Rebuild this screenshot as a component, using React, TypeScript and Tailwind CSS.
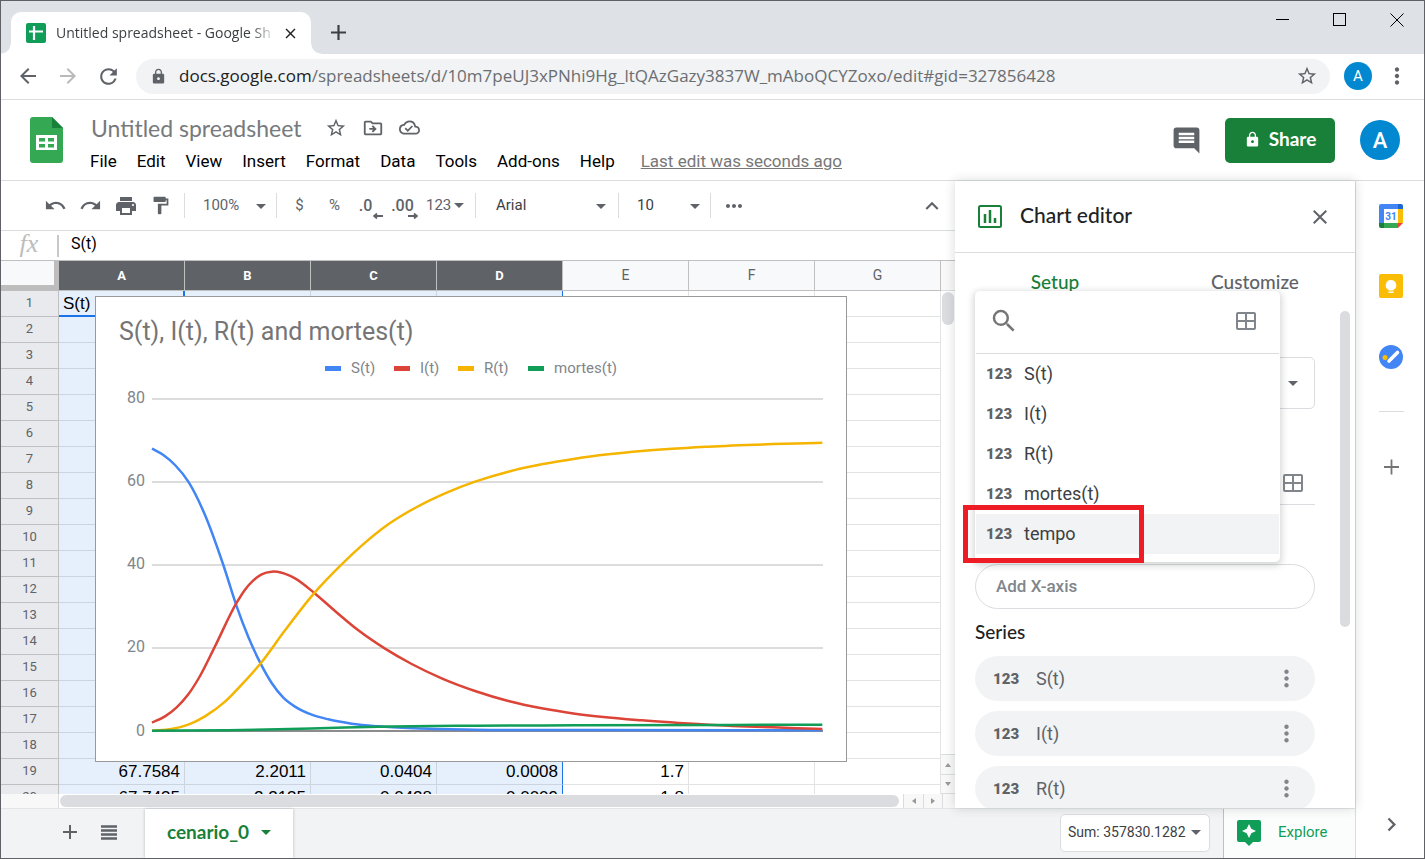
import React from "react";
import {
  MdAdd,
  MdArrowBack,
  MdArrowForward,
  MdChevronRight,
  MdClose,
  MdComment,
  MdFormatPaint,
  MdKeyboardArrowUp,
  MdLock,
  MdMoreHoriz,
  MdMoreVert,
  MdOutlineCloudDone,
  MdOutlineDriveFileMove,
  MdPrint,
  MdRedo,
  MdRefresh,
  MdSearch,
  MdStarBorder,
  MdUndo,
} from "react-icons/md";

type Point = [number, number];

const menus = ["File", "Edit", "View", "Insert", "Format", "Data", "Tools", "Add-ons", "Help"];
const columns = ["A", "B", "C", "D", "E", "F", "G"];
const fields = ["S(t)", "I(t)", "R(t)", "mortes(t)", "tempo"];
const series = ["S(t)", "I(t)", "R(t)"];

const cells: Record<number, string[]> = {
  1: ["S(t)"],
  19: ["67.7584", "2.2011", "0.0404", "0.0008", "1.7"],
  20: ["67.7435", "2.2135", "0.0428", "0.0009", "1.8"],
};

const curves: { name: string; color: string; points: Point[] }[] = [
  {
    name: "S(t)",
    color: "#4285f4",
    points: [
      [171, 206], [205, 225], [240, 255], [280, 305], [330, 405], [385, 555], [425, 679],
      [460, 771], [497, 851], [530, 909], [565, 953], [600, 980], [650, 1004], [700, 1018], [770, 1031],
      [850, 1039], [960, 1045], [1140, 1049], [1500, 1050], [2182, 1051],
    ],
  },
  {
    name: "I(t)",
    color: "#db4437",
    points: [
      [171, 1028], [210, 1009], [245, 982], [280, 943], [315, 888], [360, 799], [425, 668],
      [450, 629], [475, 601], [500, 583], [530, 575], [560, 578], [600, 595], [657, 638], [720, 693],
      [790, 751], [870, 806], [950, 852], [1040, 895], [1140, 933], [1240, 963], [1340, 985], [1440, 1001],
      [1640, 1021], [1840, 1034], [2182, 1047],
    ],
  },
  {
    name: "R(t)",
    color: "#f4b400",
    points: [
      [171, 1052], [230, 1047], [280, 1034], [330, 1009], [390, 965], [440, 914], [497, 850],
      [570, 751], [657, 640], [740, 553], [800, 497], [880, 433], [960, 384], [1050, 340], [1140, 305],
      [1240, 275], [1340, 253], [1440, 236], [1540, 223], [1640, 213], [1840, 200], [2182, 188],
    ],
  },
  {
    name: "mortes(t)",
    color: "#0f9d58",
    points: [
      [171, 1052], [400, 1051], [550, 1048], [700, 1044], [850, 1040], [1140, 1037], [1440, 1036], [2182, 1034],
    ],
  },
];

function slopeAt(points: Point[], i: number) {
  const secant = (a: number, b: number) => (points[b][1] - points[a][1]) / (points[b][0] - points[a][0]);
  if (i === 0) return secant(0, 1);
  if (i === points.length - 1) return secant(i - 1, i);
  const before = points[i][0] - points[i - 1][0];
  const after = points[i + 1][0] - points[i][0];
  return (secant(i - 1, i) * after + secant(i, i + 1) * before) / (before + after);
}

function smoothPath(points: Point[]) {
  let d = `M${points[0][0]} ${points[0][1]}`;
  for (let i = 0; i < points.length - 1; i++) {
    const [x1, y1] = points[i];
    const [x2, y2] = points[i + 1];
    const third = (x2 - x1) / 3;
    d += ` C${x1 + third} ${y1 + slopeAt(points, i) * third} ${x2 - third} ${y2 - slopeAt(points, i + 1) * third} ${x2} ${y2}`;
  }
  return d;
}

function Caret({ className = "" }: { className?: string }) {
  return (
    <svg viewBox="0 0 10 5" className={`h-[5px] w-[10px] shrink-0 ${className}`} aria-hidden="true">
      <path d="M0 0h10L5 5z" fill="currentColor" />
    </svg>
  );
}

function GridIcon() {
  return (
    <svg viewBox="0 0 20 18" className="h-[18px] w-5 text-[#80868b]" fill="none" stroke="currentColor" strokeWidth="2" aria-hidden="true">
      <rect x="1" y="1" width="18" height="16" rx="1" />
      <path d="M10 1v16M1 9h18" />
    </svg>
  );
}

function NumberMark() {
  return (
    <span className="w-[26px] shrink-0 font-['Roboto',sans-serif] text-[15px] leading-5 font-black text-[#5f6368]">
      123
    </span>
  );
}

function Divider({ className = "" }: { className?: string }) {
  return <span className={`h-[25px] w-px shrink-0 bg-[#dadce0] ${className}`} />;
}

function BrowserChrome() {
  return (
    <header>
      <div className="flex h-[53px] items-end bg-[#dee1e6]">
        <span className="h-[10px] w-[10px] bg-[radial-gradient(circle_at_0_0,#dee1e6_9px,#fff_10px)]" />
        <div className="flex h-[42px] w-[300px] items-center rounded-t-[10px] bg-white pr-3 pl-[15px]">
          <svg viewBox="0 0 20 20" className="h-5 w-5 shrink-0" aria-hidden="true">
            <rect width="20" height="20" rx="2" fill="#0f9d58" />
            <path d="M8 3v14M3 8.500h14" stroke="#fff" strokeWidth="2.200" />
          </svg>
          <span className="ml-[10px] w-[220px] font-['Open_Sans',sans-serif] text-[14px] leading-5 whitespace-nowrap text-[#3c4043] [mask-image:linear-gradient(to_right,#000_195px,transparent_220px)]">
            Untitled spreadsheet - Google Sh
          </span>
          <button aria-label="Close tab" className="ml-auto text-[#202124]">
            <MdClose size={17} />
          </button>
        </div>
        <span className="h-[10px] w-[10px] bg-[radial-gradient(circle_at_100%_0,#dee1e6_9px,#fff_10px)]" />
        <button aria-label="New tab" className="mb-[10px] ml-[3px] flex h-6 w-7 items-center justify-center text-[#3c4043]">
          <svg viewBox="0 0 15 15" className="h-[15px] w-[15px]" stroke="currentColor" strokeWidth="2.200"><path d="M7.500 0v15M0 7.500h15" /></svg>
        </button>
        <div className="mb-[27px] ml-auto flex gap-[43px] pr-5 text-black">
          <button aria-label="Minimize">
            <svg viewBox="0 0 14 14" className="h-[14px] w-[14px]" stroke="currentColor"><path d="M0 6.500h13" /></svg>
          </button>
          <button aria-label="Maximize">
            <svg viewBox="0 0 14 14" className="h-[14px] w-[14px]" stroke="currentColor" fill="none"><rect x=".5" y=".5" width="12" height="12" /></svg>
          </button>
          <button aria-label="Close window">
            <svg viewBox="0 0 14 14" className="h-[14px] w-[14px]" stroke="currentColor"><path d="M.5.5l13 13M13.500.5l-13 13" /></svg>
          </button>
        </div>
      </div>
      <div className="flex h-[46px] items-center border-b border-[#dadce0] bg-white pb-px pl-[15px] text-[#5f6368]">
        <button aria-label="Back" className="w-10"><MdArrowBack size={24} /></button>
        <button aria-label="Forward" className="w-10 text-[#bababc]"><MdArrowForward size={24} /></button>
        <button aria-label="Reload" className="w-10"><MdRefresh size={25} /></button>
        <div className="flex h-[35px] flex-1 items-center rounded-full bg-[#f1f3f4] pr-3 pl-[14px]">
          <MdLock size={17} />
          <p className="ml-3 flex-1 font-['Open_Sans',sans-serif] text-[17px] leading-6 text-[#6b6e72]">
            <span className="text-[#202124]">docs.google.com</span>
            /spreadsheets/d/10m7peUJ3xPNhi9Hg_ltQAzGazy3837W_mAboQCYZoxo/edit#gid=327856428
          </p>
          <button aria-label="Bookmark"><MdStarBorder size={22} /></button>
        </div>
        <span className="ml-[14px] flex h-7 w-7 items-center justify-center rounded-full bg-[#0288d1] font-['Roboto',sans-serif] text-[15px] text-white">A</span>
        <button aria-label="Browser menu" className="mr-[14px] ml-3"><MdMoreVert size={26} /></button>
      </div>
    </header>
  );
}

function DocumentHeader() {
  return (
    <div className="flex h-[81px] shrink-0 items-center border-b border-[#dadce0] bg-white pr-6 pl-[29px]">
      <svg viewBox="0 0 33 46" className="h-[46px] w-[33px] shrink-0" aria-hidden="true">
        <path d="M3 0h19l11 11v32a3 3 0 0 1-3 3H3a3 3 0 0 1-3-3V3a3 3 0 0 1 3-3z" fill="#34a853" />
        <path d="M22 0l11 11H22z" fill="#188038" />
        <path d="M6 18h21v15H6z" fill="#fff" />
        <path d="M9 21h6v3.500H9zM18 21h6v3.500h-6zM9 27h6v3.500H9zM18 27h6v3.500h-6z" fill="#34a853" />
      </svg>
      <div className="ml-[17px] pt-[5px]">
        <div className="flex h-9 items-center pl-[11px] text-[#5f6368]">
          <h1 className="mr-6 font-['Lato',sans-serif] text-[23px] leading-8 text-[#777a7d]">Untitled spreadsheet</h1>
          <button aria-label="Star" className="w-[37px]"><MdStarBorder size={22} /></button>
          <button aria-label="Move" className="w-[37px]"><MdOutlineDriveFileMove size={22} /></button>
          <button aria-label="Saved to Drive"><MdOutlineCloudDone size={21} /></button>
        </div>
        <nav className="flex h-[30px] items-center font-['Roboto',sans-serif] text-[17px] leading-6 text-black">
          {menus.map((menu) => (
            <button key={menu} className="px-[10px]">{menu}</button>
          ))}
          <a href="#history" className="ml-4 text-[#777] underline">Last edit was seconds ago</a>
        </nav>
      </div>
      <button aria-label="Comments" className="ml-auto text-[#5f6368]"><MdComment size={31} /></button>
      <button className="ml-[23px] flex h-[45px] w-[110px] items-center justify-center gap-2 rounded-[5px] bg-[#188038] pb-[2px] font-['Lato',sans-serif] text-[19px] font-bold text-white">
        <MdLock size={17} />
        Share
      </button>
      <button aria-label="Account" className="ml-[25px] h-10 w-10 rounded-full bg-[#0288d1] font-['Roboto',sans-serif] text-[22px] font-medium text-white">A</button>
    </div>
  );
}

function Toolbar() {
  const tool = "flex h-9 w-[35px] items-center justify-center";
  return (
    <div className="flex h-[50px] shrink-0 items-center border-b border-[#dadce0] bg-white pl-[37px] font-['Roboto',sans-serif] text-[15px] text-[#5f6368]">
      <button aria-label="Undo" className={tool}><MdUndo size={23} /></button>
      <button aria-label="Redo" className={tool}><MdRedo size={23} /></button>
      <button aria-label="Print" className={tool}><MdPrint size={24} /></button>
      <button aria-label="Paint format" className={tool}><MdFormatPaint size={21} /></button>
      <Divider className="ml-[6px]" />
      <div className="relative">
        <select aria-label="Zoom" className="h-9 w-[91px] appearance-none bg-transparent pl-[18px]">
          <option>100%</option>
        </select>
        <Caret className="pointer-events-none absolute top-4 right-[10px]" />
      </div>
      <Divider className="mr-[5px]" />
      <button className={tool}>$</button>
      <button className={tool}>%</button>
      <button className={`${tool} relative pr-2 text-[16px] font-medium`}>
        .0
        <svg viewBox="0 0 10 6" className="absolute right-1 bottom-[5px] h-[6px] w-[10px]" stroke="currentColor" strokeWidth="1.800" fill="none"><path d="M10 3H1M4 .5L1 3l3 2.500" /></svg>
      </button>
      <button className={`${tool} relative pr-1 text-[16px] font-medium`}>
        .00
        <svg viewBox="0 0 10 6" className="absolute right-1 bottom-[5px] h-[6px] w-[10px]" stroke="currentColor" strokeWidth="1.800" fill="none"><path d="M0 3h9M6 .5L9 3 6 5.500" /></svg>
      </button>
      <button className="flex w-[53px] items-center gap-[3px] pl-1">
        123
        <Caret />
      </button>
      <Divider />
      <div className="relative">
        <select aria-label="Font" className="h-9 w-[142px] appearance-none bg-transparent pl-5 text-[#3c4043]">
          <option>Arial</option>
        </select>
        <Caret className="pointer-events-none absolute top-4 right-3" />
      </div>
      <Divider />
      <div className="relative">
        <select aria-label="Font size" className="h-9 w-[91px] appearance-none bg-transparent pl-[18px] text-[#3c4043]">
          <option>10</option>
        </select>
        <Caret className="pointer-events-none absolute top-4 right-[10px]" />
      </div>
      <Divider />
      <button aria-label="More" className="flex w-[46px] justify-center"><MdMoreHoriz size={24} /></button>
      <button aria-label="Hide the menus" className="mr-[5px] ml-auto flex w-9 justify-center"><MdKeyboardArrowUp size={26} /></button>
    </div>
  );
}

function Chart() {
  const ticks = [
    { label: "80", y: 102 },
    { label: "60", y: 185 },
    { label: "40", y: 268 },
    { label: "20", y: 351 },
  ];
  const legend = [
    { name: "S(t)", color: "#4285f4", x: 230 },
    { name: "I(t)", color: "#db4437", x: 299 },
    { name: "R(t)", color: "#f4b400", x: 363 },
    { name: "mortes(t)", color: "#0f9d58", x: 433 },
  ];
  return (
    <figure className="absolute top-[35px] left-[94px] h-[466px] w-[752px] border border-[#999] bg-white">
      <svg viewBox="0 0 750 464" className="h-full w-full font-['Roboto',sans-serif]" role="img" aria-label="S(t), I(t), R(t) and mortes(t)">
        <text x="23" y="43" fontSize="25" fill="#757575">S(t), I(t), R(t) and mortes(t)</text>
        {legend.map((entry) => (
          <g key={entry.name}>
            <rect x={entry.x - 1} y="69" width="16" height="5" fill={entry.color} />
            <text x={entry.x + 25} y="76" fontSize="15" fill="#80868b">{entry.name}</text>
          </g>
        ))}
        {ticks.map((tick) => (
          <g key={tick.label}>
            <path d={`M56 ${tick.y}h671`} stroke="#dcdcdc" strokeWidth="2" />
            <text x="49" y={tick.y + 4} fontSize="16" fill="#80868b" textAnchor="end">{tick.label}</text>
          </g>
        ))}
        <path d="M56 434h671" stroke="#666" strokeWidth="1.500" />
        <text x="49" y="439" fontSize="16" fill="#80868b" textAnchor="end">0</text>
        <g transform="translate(-1 83) scale(.33333)" fill="none" strokeWidth="7.500">
          {curves.map((curve) => (
            <path key={curve.name} d={smoothPath(curve.points)} stroke={curve.color} />
          ))}
        </g>
      </svg>
    </figure>
  );
}

function Grid() {
  const rows = Array.from({ length: 20 }, (_, i) => i + 1);
  return (
    <div className="relative min-w-0 flex-1 overflow-hidden bg-white">
      <table className="w-[940px] table-fixed border-separate border-spacing-0">
        <colgroup>
          <col className="w-[58px]" />
          {columns.map((c) => (
            <col key={c} className="w-[126px]" />
          ))}
        </colgroup>
        <thead>
          <tr className="h-[30px] font-['Roboto',sans-serif] text-[13px] text-[#5f6368]">
            <td className="border-r-[5px] border-b-[6px] border-[#bdbdbd] bg-[#f8f9fa] p-0" />
            {columns.map((c, i) => (
              <th
                key={c}
                scope="col"
                className={`border-r border-b border-[#c0c0c0] p-0 ${i < 4 ? "bg-[#5f6368] font-bold text-white" : "bg-[#f8f9fa] text-[14px] font-normal"}`}
              >
                {c}
              </th>
            ))}
          </tr>
        </thead>
        <tbody>
          {rows.map((row) => (
            <tr key={row} className="h-[26px]">
              <th scope="row" className="border-r border-b border-[#c0c0c0] bg-[#e8eaed] p-0 pb-[2px] font-['Roboto',sans-serif] text-[13px] leading-5 font-normal text-[#5f6368]">
                {row}
              </th>
              {columns.map((c, i) => (
                <td
                  key={c}
                  className={`border-r border-b p-0 px-1 pt-px font-['Liberation_Sans',sans-serif] text-[17px] leading-5 text-black ${
                    i < 4 ? "bg-[#e6f0fc]" : "bg-white"
                  } ${
                    row === 1 && i === 0
                      ? "border-[#1a73e8] text-left shadow-[inset_-1px_-1px_0_#1a73e8]"
                      : i === 3
                        ? "border-r-[#1a73e8] border-b-[#cbd4df] text-right"
                        : i < 3
                          ? "border-[#cbd4df] text-right"
                          : "border-[#e2e3e3] text-right"
                  }`}
                >
                  {cells[row]?.[i] ?? ""}
                </td>
              ))}
            </tr>
          ))}
        </tbody>
      </table>
      <Chart />
    </div>
  );
}

function SheetArea() {
  return (
    <main className="flex min-h-0 min-w-0 flex-1 flex-col">
      <Toolbar />
      <div className="flex h-[30px] shrink-0 items-center border-b border-[#c0c0c0] bg-white">
        <span className="w-14 pb-1 text-center font-['Liberation_Serif',serif] text-[26px] leading-6 text-[#bdbdbd] italic">fx</span>
        <span className="h-[22px] w-[2px] bg-[#c8c8c8]" />
        <input
          aria-label="Formula"
          defaultValue="S(t)"
          className="h-6 min-w-0 flex-1 bg-transparent pb-1 pl-3 font-['Roboto',sans-serif] text-[16px] text-black outline-none"
        />
      </div>
      <div className="flex min-h-0 flex-1">
        <Grid />
        <div className="flex w-[14px] shrink-0 flex-col items-center bg-white">
          <span className="h-[30px] w-full border-b border-[#dadce0] bg-[#f8f8f8]" />
          <span className="mt-px h-[33px] w-3 rounded-full bg-[#dadce0]" />
          <button aria-label="Scroll up" className="mt-auto flex h-5 w-full items-center justify-center border-t border-[#dadce0] bg-[#f8f8f8] text-[#999]">
            <svg viewBox="0 0 6 4" className="h-1 w-[6px]"><path d="M0 4h6L3 0z" fill="currentColor" /></svg>
          </button>
          <button aria-label="Scroll down" className="flex h-5 w-full items-center justify-center border-y border-[#dadce0] bg-[#f8f8f8] text-[#999]">
            <svg viewBox="0 0 6 4" className="h-1 w-[6px]"><path d="M0 0h6L3 4z" fill="currentColor" /></svg>
          </button>
        </div>
      </div>
      <div className="flex h-[14px] shrink-0 items-stretch bg-white">
        <span className="w-[58px] border-r border-[#dadce0] bg-[#f8f8f8]" />
        <span className="my-px ml-px flex-1 rounded-full bg-[#dadce0]" />
        <button aria-label="Scroll left" className="ml-1 flex w-5 items-center justify-center border-l border-[#dadce0] bg-[#f8f8f8] text-[#999]">
          <svg viewBox="0 0 4 6" className="h-[6px] w-1"><path d="M4 0v6L0 3z" fill="currentColor" /></svg>
        </button>
        <button aria-label="Scroll right" className="flex w-5 items-center justify-center border-x border-[#dadce0] bg-[#f8f8f8] text-[#999]">
          <svg viewBox="0 0 4 6" className="h-[6px] w-1"><path d="M0 0v6l4-3z" fill="currentColor" /></svg>
        </button>
        <span className="w-3 bg-[#f8f8f8]" />
      </div>
    </main>
  );
}

function FieldMenu() {
  return (
    <div className="absolute top-[110px] left-5 w-[305px] rounded-[5px] bg-white px-px pb-2 shadow-[0_2px_6px_2px_rgba(60,64,67,0.2)]">
      <div className="flex h-[63px] items-center border-b border-[#dadce0] pr-[23px] pb-[2px] pl-[13px]">
        <label htmlFor="field-search" className="text-[#757575]"><MdSearch size={30} aria-label="Search" /></label>
        <input id="field-search" className="h-9 min-w-0 flex-1 outline-none" />
        <button aria-label="Select range"><GridIcon /></button>
      </div>
      <ul>
        {fields.map((field) => (
          <li key={field} className="relative">
            <button
              className={`flex h-10 w-full items-center gap-[12px] pb-px pl-[10px] text-left font-['Roboto',sans-serif] text-[18px] text-[#3c4043] ${field === "tempo" ? "bg-[#f1f3f4]" : ""}`}
            >
              <NumberMark />
              {field}
            </button>
            {field === "tempo" && (
              <span className="pointer-events-none absolute -top-[9px] -left-[13px] h-[58px] w-[181px] border-[5px] border-[#ee1c25]" />
            )}
          </li>
        ))}
      </ul>
    </div>
  );
}

function ChartEditor() {
  return (
    <aside className="relative flex w-[400px] shrink-0 flex-col bg-white shadow-[0_0_10px_rgba(60,64,67,0.2)]">
      <div className="flex h-[72px] shrink-0 items-center border-b border-[#dadce0] px-[23px]">
        <svg viewBox="0 0 24 23" className="h-[23px] w-6 text-[#188038]" fill="none" stroke="currentColor" strokeWidth="2" aria-hidden="true">
          <rect x="1" y="1" width="22" height="21" rx="1.500" />
          <path d="M7 9v9M12 5v13M17 13v5" strokeWidth="2.500" />
        </svg>
        <h2 className="ml-[18px] pb-1 font-['Lato',sans-serif] text-[21px] leading-6 font-medium text-[#202124]">Chart editor</h2>
        <button aria-label="Close editor" className="ml-auto text-[#5f6368]"><MdClose size={24} /></button>
      </div>
      <div className="grid h-[58px] shrink-0 grid-cols-2 font-['Lato',sans-serif] text-[19px] font-medium text-[#5f6368]">
        <button className="text-[#188038]">Setup</button>
        <button>Customize</button>
      </div>
      <div className="flex min-h-0 flex-1 items-start overflow-hidden">
        <div className="flex min-w-0 flex-1 flex-col pl-5">
          <div className="relative mt-[46px]">
            <select aria-label="Chart type" className="h-[52px] w-full appearance-none rounded-[5px] border border-[#dadce0] bg-white" />
            <Caret className="pointer-events-none absolute top-6 right-[17px] text-[#5f6368]" />
          </div>
          <div className="mt-[52px] flex h-11 items-center border-b border-[#dadce0] pr-3">
            <input aria-label="Data range" className="h-9 min-w-0 flex-1 outline-none" />
            <button aria-label="Select data range"><GridIcon /></button>
          </div>
          <button className="mt-[59px] h-[45px] rounded-full border border-[#dadce0] pl-5 text-left font-['Roboto',sans-serif] text-[17px] font-medium text-[#80868b]">
            Add X-axis
          </button>
          <h3 className="mt-[11px] font-['Lato',sans-serif] text-[19px] leading-6 font-medium text-[#202124]">Series</h3>
          <ul className="mt-3 flex flex-col gap-[10px]">
            {series.map((name) => (
              <li key={name} className="flex h-[45px] items-center rounded-full bg-[#f1f3f4] pr-[15px] pl-[18px] font-['Roboto',sans-serif] text-[18px] text-[#5f6368]">
                <NumberMark />
                <span className="ml-[17px]">{name}</span>
                <button aria-label={`Options for ${name}`} className="ml-auto text-[#80868b]"><MdMoreVert size={27} /></button>
              </li>
            ))}
          </ul>
        </div>
        <span className="mr-[5px] ml-[25px] h-[316px] w-[10px] rounded-full bg-[#dadce0]" />
      </div>
      <FieldMenu />
    </aside>
  );
}

function BottomBar() {
  return (
    <footer className="flex h-[50px] shrink-0 items-stretch border-t border-[#e3e5e8] bg-[#f1f3f4]">
      <button aria-label="Add sheet" className="ml-[57px] pb-[3px] text-[#5f6368]"><MdAdd size={24} /></button>
      <button aria-label="All sheets" className="ml-[19px] pb-[3px] text-[#5f6368]">
        <svg viewBox="0 0 16 15" className="h-[15px] w-4" stroke="currentColor" strokeWidth="2.400"><path d="M0 1.500h16M0 5.500h16M0 9.500h16M0 13.500h16" /></svg>
      </button>
      <button className="ml-7 flex w-[148px] items-center justify-center gap-3 bg-white pb-[3px] font-['Lato',sans-serif] text-[19px] font-bold text-[#188038] shadow-[0_0_3px_rgba(60,64,67,0.3)]">
        cenario_0
        <Caret />
      </button>
      <button className="mt-[5px] mr-[13px] ml-auto flex h-[38px] w-[150px] items-center justify-between rounded-[5px] border border-[#dadce0] bg-white pr-2 pb-px pl-[7px] font-['Roboto',sans-serif] text-[14px] text-[#3c4043]">
        Sum: 357830.1282
        <Caret className="text-[#5f6368]" />
      </button>
      <button className="flex w-[132px] items-center gap-[17px] border-l border-[#c0c0c0] bg-[#fbfdfc] pb-[2px] pl-[13px] font-['Roboto',sans-serif] text-[15px] text-[#0f9d58]">
        <svg viewBox="0 0 24 26" className="h-[26px] w-6" aria-hidden="true">
          <path d="M2 0h20a2 2 0 0 1 2 2v18a2 2 0 0 1-2 2h-6l-4 4-4-4H2a2 2 0 0 1-2-2V2a2 2 0 0 1 2-2z" fill="#0f9d58" />
          <path d="M12 4l2.300 4.700L19 11l-4.700 2.300L12 18l-2.300-4.700L5 11l4.700-2.300z" fill="#fff" />
        </svg>
        Explore
      </button>
    </footer>
  );
}

function SideRail() {
  return (
    <nav className="flex w-[69px] shrink-0 flex-col items-center border-l border-[#dadce0] bg-white pt-[23px] pb-5 pl-[2px]">
      <button aria-label="Calendar">
        <svg viewBox="0 0 24 24" className="h-6 w-6">
          <path d="M2 0h17v5H5v14H0V2a2 2 0 0 1 2-2z" fill="#4285f4" />
          <path d="M19 0h3a2 2 0 0 1 2 2v3h-5z" fill="#1967d2" />
          <path d="M19 5h5v14h-5z" fill="#fbbc04" />
          <path d="M5 19h14v5H5z" fill="#34a853" />
          <path d="M0 19h5v5H2a2 2 0 0 1-2-2z" fill="#188038" />
          <path d="M19 19h5l-5 5z" fill="#ea4335" />
          <path d="M5 5h14v14H5z" fill="#fff" />
          <text x="12" y="16" textAnchor="middle" fontSize="10" fontWeight="700" fill="#4285f4" className="font-['Roboto',sans-serif]">31</text>
        </svg>
      </button>
      <button aria-label="Keep" className="mt-[46px]">
        <svg viewBox="0 0 24 24" className="h-6 w-6">
          <rect width="24" height="24" rx="2" fill="#fbbc04" />
          <path d="M12 6a5.200 5.200 0 0 0-2.500 9.800V16.500h5v-.7A5.200 5.200 0 0 0 12 6zM9.500 17.500h5v1.500h-5z" fill="#fff" />
        </svg>
      </button>
      <button aria-label="Tasks" className="mt-[47px]">
        <svg viewBox="0 0 24 24" className="h-6 w-6">
          <circle cx="12" cy="12" r="12" fill="#4285f4" />
          <circle cx="6" cy="12.500" r="2.500" fill="#fbbc04" />
          <path d="M10 16l8.500-8.500" stroke="#fff" strokeWidth="3.600" strokeLinecap="round" />
        </svg>
      </button>
      <span className="mt-[42px] h-px w-[25px] bg-[#dadce0]" />
      <button aria-label="Get add-ons" className="mt-[42px] text-[#757575]">
        <svg viewBox="0 0 15 15" className="h-[26px] w-[15px]" stroke="currentColor" strokeWidth="1.800"><path d="M7.500 0v15M0 7.500h15" /></svg>
      </button>
      <button aria-label="Hide side panel" className="mt-auto text-[#5f6368]"><MdChevronRight size={27} /></button>
    </nav>
  );
}

export default function App() {
  return (
    <div className="flex h-screen flex-col overflow-hidden border border-[#5f6166] bg-white">
      <BrowserChrome />
      <DocumentHeader />
      <div className="flex min-h-0 flex-1">
        <div className="flex min-w-0 flex-1 flex-col">
          <div className="flex min-h-0 flex-1">
            <SheetArea />
            <ChartEditor />
          </div>
          <BottomBar />
        </div>
        <SideRail />
      </div>
    </div>
  );
}
